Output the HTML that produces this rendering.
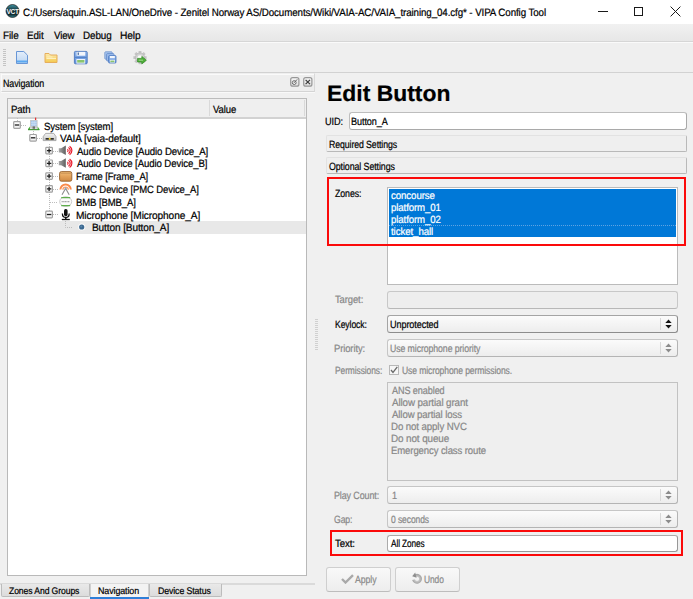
<!DOCTYPE html>
<html><head><meta charset="utf-8">
<style>
*{margin:0;padding:0;box-sizing:border-box}
html,body{width:693px;height:599px;overflow:hidden;background:#f0f0f0;font-family:"Liberation Sans",sans-serif;color:#000;position:relative}
.a{position:absolute}
.t{position:absolute;white-space:nowrap;transform-origin:0 0;text-rendering:geometricPrecision;-webkit-text-stroke:0.2px currentColor}
.exp{position:absolute;width:8px;height:8px;border:1px solid #a6a6a6;background:linear-gradient(#fff,#ececec);border-radius:1px}
.exp:before{content:"";position:absolute;left:1px;top:2px;width:4px;height:2px;background:#1a1a1a}
.exp.p:after{content:"";position:absolute;left:2px;top:1px;width:2px;height:4px;background:#1a1a1a}
.dh{position:absolute;height:1px;background:repeating-linear-gradient(90deg,#a8a8a8 0 1px,transparent 1px 2px)}
.dv{position:absolute;width:1px;background:repeating-linear-gradient(#a8a8a8 0 1px,transparent 1px 2px)}
.inp{position:absolute;background:#fff;border:1px solid #bdbdbd;border-right-color:#a9a9a9;border-bottom-color:#a9a9a9;border-radius:3px}
.combo{position:absolute;border:1px solid #c6c6c6;border-bottom-color:#b4b4b4;border-right-color:#b4b4b4;border-radius:3px;background:linear-gradient(#fbfbfb,#ededed)}
.combo .sep{position:absolute;right:16px;top:2px;bottom:2px;width:1px;background:#d8d8d8}
.bar{position:absolute;border:1px solid #e2e2e2;border-right-color:#b9b9b9;border-bottom-color:#b9b9b9;border-radius:2px;background:#efefef}
.btn{position:absolute;border:1px solid #cfcfcf;border-bottom-color:#bdbdbd;border-radius:3px;background:linear-gradient(#f9f9f9,#ededed)}
.red{position:absolute;border:2px solid #fb0a0a}
</style></head><body>
<!-- title bar -->
<div class="a" style="left:0;top:0;width:693px;height:24px;background:#fff"></div>
<svg class="a" style="left:0;top:0" width="24" height="24" viewBox="0 0 24 24">
  <defs><linearGradient id="gic" x1="0" y1="0" x2="0" y2="1"><stop offset="0" stop-color="#3f97a6"/><stop offset="0.4" stop-color="#1a3c44"/><stop offset="0.75" stop-color="#10282e"/><stop offset="1" stop-color="#2f8290"/></linearGradient></defs>
  <circle cx="12.5" cy="11" r="6.5" fill="url(#gic)" stroke="#1a1a1a" stroke-width="0.7"/>
  <text x="12.6" y="13.9" font-size="6.6" font-weight="bold" text-anchor="middle" fill="#f4f4f4" font-family="Liberation Sans" letter-spacing="-0.4">VCT</text>
</svg>
<div class="a" style="left:598px;top:11px;width:10px;height:1px;background:#1a1a1a"></div>
<div class="a" style="left:634px;top:7px;width:9px;height:9px;border:1px solid #1a1a1a"></div>
<svg class="a" style="left:670px;top:6px" width="11" height="11" viewBox="0 0 11 11"><path d="M0.6 0.6L10.4 10.4M10.4 0.6L0.6 10.4" stroke="#1a1a1a" stroke-width="1"/></svg>
<!-- menu -->
<div class="a" style="left:0;top:24px;width:693px;height:18px;background:linear-gradient(#f1f1f1,#e7e7e7);border-bottom:1px solid #d6d6d6"></div>
<!-- toolbar -->
<div class="a" style="left:0;top:42px;width:693px;height:31px;background:#efefef;border-top:1px solid #fafafa;border-bottom:1px solid #d2d2d2"></div>
<div class="a" style="left:3px;top:49px;width:3px;height:17px;background:repeating-linear-gradient(#c4c4c4 0 1px,transparent 1px 2px)"></div>
<svg class="a" style="left:15px;top:50px" width="14" height="15" viewBox="0 0 14 15">
  <defs><linearGradient id="gd" x1="0" y1="0" x2="0" y2="1"><stop offset="0" stop-color="#e4eefa"/><stop offset="1" stop-color="#bcd6f3"/></linearGradient></defs>
  <path d="M1.5 1.5H8.8L12.5 5.2V13.5H1.5Z" fill="url(#gd)" stroke="#6896d6" stroke-linejoin="round"/>
  <rect x="2" y="10.5" width="10" height="2" fill="#5aa8f0"/>
</svg>
<svg class="a" style="left:44px;top:52px" width="14" height="12" viewBox="0 0 14 12">
  <defs><linearGradient id="gf" x1="0" y1="0" x2="0" y2="1"><stop offset="0" stop-color="#fdeab0"/><stop offset="1" stop-color="#f4c94e"/></linearGradient></defs>
  <path d="M1 1.5H5L6.5 3H13V10.5H1Z" fill="url(#gf)" stroke="#e6ae5c" stroke-linejoin="round"/>
  <path d="M2.5 5H8.5M2.5 6.5H12" stroke="#fff6d0" stroke-width="0.8"/>
</svg>
<svg class="a" style="left:70px;top:47px" width="50" height="21" viewBox="70 47 50 21">
  <defs><linearGradient id="gsv" x1="0" y1="0" x2="0" y2="1"><stop offset="0" stop-color="#93b9ee"/><stop offset="1" stop-color="#5f8fd8"/></linearGradient></defs>
  <rect x="74.4" y="51.4" width="12.8" height="12.4" rx="1" fill="url(#gsv)" stroke="#4a76bc" stroke-width="0.9"/>
  <rect x="76.6" y="51.9" width="8.6" height="3.8" fill="#f2f6fc"/>
  <rect x="77.6" y="52.5" width="1.4" height="2.4" fill="#5a7aa8"/>
  <rect x="75" y="56.8" width="11.6" height="1" fill="#4d7cc4"/>
  <rect x="76.4" y="59" width="8.8" height="4.6" fill="#eef3fa"/>
  <rect x="77.2" y="60" width="7.2" height="2.6" fill="#8ac46e"/>
  <rect x="104.8" y="51.8" width="7.4" height="7.4" rx="0.8" fill="#a9c6f0" stroke="#6d93cc" stroke-width="0.8"/>
  <rect x="106.6" y="53.6" width="7.4" height="7.4" rx="0.8" fill="#9dbdec" stroke="#5f88c6" stroke-width="0.8"/>
  <rect x="108.6" y="55.6" width="7.4" height="7.4" rx="0.8" fill="url(#gsv)" stroke="#4a76bc" stroke-width="0.8"/>
  <rect x="110" y="56" width="4.8" height="2.2" fill="#f2f6fc"/>
  <rect x="109.8" y="59.8" width="5.2" height="2.8" fill="#eef3fa"/>
  <rect x="110.4" y="60.6" width="4" height="1.6" fill="#8ac46e"/>
</svg>
<svg class="a" style="left:128px;top:47px" width="24" height="21" viewBox="128 47 24 21">
  <g transform="translate(140 57.6)">
    <g fill="#c4c4c4">
      <rect x="-1.4" y="-6.6" width="2.8" height="3"/><rect x="-1.4" y="3.6" width="2.8" height="3"/><rect x="-6.6" y="-1.4" width="3" height="2.8"/><rect x="3.6" y="-1.4" width="3" height="2.8"/>
      <rect x="-1.4" y="-6.6" width="2.8" height="3" transform="rotate(45)"/><rect x="-1.4" y="-6.6" width="2.8" height="3" transform="rotate(-45)"/><rect x="-1.4" y="3.6" width="2.8" height="3" transform="rotate(45)"/><rect x="-1.4" y="3.6" width="2.8" height="3" transform="rotate(-45)"/>
    </g>
    <circle r="4.6" fill="#d2d2d2" stroke="#b0b0b0" stroke-width="0.6"/>
    <circle r="2.4" fill="#fbfbfb"/>
  </g>
  <path d="M137.6 58.4H141.8V56.4L146.4 60.2L141.8 64V62H137.6Z" fill="#4fae38" stroke="#2e8a22" stroke-width="0.7" stroke-linejoin="round"/>
  <path d="M138.6 60.2H143" stroke="#a8dc98" stroke-width="0.9"/>
</svg>
<!-- navigation dock title -->
<div class="a" style="left:1px;top:73px;width:314px;height:19px;border:1px solid #d9d9d9;border-left-color:#fafafa;border-top-color:#efefef;border-bottom-color:#d4d4d4;background:#eeeeee;box-shadow:inset 0 1px 0 #fafafa"></div>
<div class="a" style="left:1px;top:92px;width:314px;height:1px;background:#f9f9f9"></div>
<svg class="a" style="left:289px;top:76px" width="26" height="12" viewBox="289 76 26 12">
  <defs><linearGradient id="gdb" x1="0" y1="0" x2="0" y2="1"><stop offset="0" stop-color="#f6f6f6"/><stop offset="1" stop-color="#dedede"/></linearGradient></defs>
  <rect x="290.7" y="77.6" width="8.2" height="8.6" rx="2" fill="url(#gdb)" stroke="#979797" stroke-width="1.2"/>
  <circle cx="294.2" cy="82.6" r="1.9" fill="#fff" stroke="#5a5a5a" stroke-width="0.9"/>
  <path d="M293.6 83.2L297.2 79.4" stroke="#5a5a5a" stroke-width="0.9"/>
  <rect x="303.7" y="77.6" width="8.2" height="8.6" rx="2" fill="url(#gdb)" stroke="#979797" stroke-width="1.2"/>
  <path d="M305.6 79.8L310 84.2M310 79.8L305.6 84.2" stroke="#3a3a3a" stroke-width="1.2"/>
</svg>

<!-- tree view -->
<div class="a" style="left:7px;top:98px;width:300px;height:478px;border:1px solid #b9b9b9;border-top-color:#bcbcbc;background:#fff"></div>
<div class="a" style="left:8px;top:99px;width:298px;height:20px;background:#efefef;border-bottom:2px solid #d2d2d2"></div>
<div class="a" style="left:209px;top:100px;width:1px;height:16px;background:#d9d9d9"></div>
<div class="a" style="left:304px;top:100px;width:1px;height:16px;background:#d9d9d9"></div>
<div class="a" style="left:8px;top:221px;width:298px;height:13px;background:#e8e8e8"></div>
<!-- tree graphics -->
<svg class="a" style="left:0;top:0" width="320" height="240" viewBox="0 0 320 240">
  <defs>
    <linearGradient id="gexp" x1="0" y1="0" x2="0" y2="1"><stop offset="0" stop-color="#ffffff"/><stop offset="1" stop-color="#ededed"/></linearGradient>
    <linearGradient id="gspk" x1="0" y1="0" x2="1" y2="0"><stop offset="0" stop-color="#a8a8a8"/><stop offset="1" stop-color="#5e5e5e"/></linearGradient>
    <linearGradient id="gfr" x1="0" y1="0" x2="0" y2="1"><stop offset="0" stop-color="#f3c07c"/><stop offset="0.5" stop-color="#e3a25a"/><stop offset="1" stop-color="#cf8a44"/></linearGradient>
    <linearGradient id="gva" x1="0" y1="0" x2="0" y2="1"><stop offset="0" stop-color="#f4f4f4"/><stop offset="1" stop-color="#c4c4c4"/></linearGradient>
    <linearGradient id="gbl" x1="0" y1="0" x2="1" y2="0"><stop offset="0" stop-color="#c7c7c7"/><stop offset="0.5" stop-color="#f2f2f2"/><stop offset="1" stop-color="#bdbdbd"/></linearGradient>
  </defs>
  <g stroke="#bdbdbd" stroke-width="1" stroke-dasharray="1 1" fill="none">
    <path d="M17.5 118V121"/>
    <path d="M21 125.5H26"/>
    <path d="M33.5 131V134"/>
    <path d="M37 138.5H42"/>
    <path d="M49.5 144V211"/>
    <path d="M53 151.5H58M53 163.5H58M53 176.5H58M53 189.5H58M50 202.5H58M53 214.5H58"/>
    <path d="M65.5 221V227.5H73"/>
  </g>
  <g stroke="#a2a2a2" stroke-width="1.2" fill="url(#gexp)">
    <rect x="13.7" y="121.7" width="6.6" height="6.6" rx="0.8"/>
    <rect x="29.8" y="134.5" width="6.6" height="6.6" rx="0.8"/>
    <rect x="45.8" y="147.3" width="6.6" height="6.6" rx="0.8"/>
    <rect x="45.8" y="160" width="6.6" height="6.6" rx="0.8"/>
    <rect x="45.8" y="172.8" width="6.6" height="6.6" rx="0.8"/>
    <rect x="45.8" y="185.6" width="6.6" height="6.6" rx="0.8"/>
    <rect x="45.8" y="211.2" width="6.6" height="6.6" rx="0.8"/>
  </g>
  <g stroke="#1e1e1e" stroke-width="1.3" fill="none">
    <path d="M14.8 125H19.2"/>
    <path d="M30.9 137.8H35.3"/>
    <path d="M46.9 150.6H51.3M49.1 148.4V152.8"/>
    <path d="M46.9 163.3H51.3M49.1 161.1V165.5"/>
    <path d="M46.9 176.1H51.3M49.1 173.9V178.3"/>
    <path d="M46.9 188.9H51.3M49.1 186.7V191.1"/>
    <path d="M46.9 214.5H51.3"/>
  </g>
  <!-- system icon -->
  <path d="M35.6 117.6V120" stroke="#e23434" stroke-width="1.3"/>
  <rect x="30" y="120" width="7.6" height="8.6" fill="#c9c9c9"/>
  <rect x="31" y="120.8" width="5.6" height="5.4" fill="#a6c6ec"/>
  <path d="M31 122.6H36.6M31 124.4H36.6M32.9 120.8V126.2M34.8 120.8V126.2" stroke="#d8e6f6" stroke-width="0.5"/>
  <rect x="32.6" y="126.4" width="2.4" height="2.4" fill="#6e6e6e"/>
  <path d="M28 130V129L30 126.6V129.2H37.6V126.6L39.4 129V130Z" fill="#4fae3f"/>
  <rect x="28" y="129.2" width="11.4" height="1" fill="#3b8f2e"/>
  <!-- vaia icon -->
  <path d="M45.6 133.4H53.8L56 136.6V140.6H43.2V136.6Z" fill="url(#gva)" stroke="#9a9a9a" stroke-width="0.8"/>
  <path d="M44 137H55.2" stroke="#e6e6e6" stroke-width="0.6"/>
  <rect x="45.6" y="138" width="8.2" height="1.7" fill="#2e2e2e"/>
  <rect x="48.8" y="137.8" width="1.8" height="1.9" fill="#f4d424"/>
  <!-- speakers -->
  <g>
    <path d="M58.8 148.2H61.2L65.8 145.6V155.1L61.2 152.6H58.8Z" fill="url(#gspk)"/>
    <g fill="none" stroke="#ea1c2c" stroke-width="1.2">
      <path d="M67.3 149.3A1.3 1.3 0 0 1 67.3 151.7"/>
      <path d="M68.4 147.5A3.4 3.4 0 0 1 68.4 153.5"/>
      <path d="M69.6 146.2A5.2 5.2 0 0 1 69.6 154.8"/>
    </g>
  </g>
  <g transform="translate(0 12.7)">
    <path d="M58.8 148.2H61.2L65.8 145.6V155.1L61.2 152.6H58.8Z" fill="url(#gspk)"/>
    <g fill="none" stroke="#ea1c2c" stroke-width="1.2">
      <path d="M67.3 149.3A1.3 1.3 0 0 1 67.3 151.7"/>
      <path d="M68.4 147.5A3.4 3.4 0 0 1 68.4 153.5"/>
      <path d="M69.6 146.2A5.2 5.2 0 0 1 69.6 154.8"/>
    </g>
  </g>
  <!-- frame -->
  <rect x="59.6" y="171.6" width="12.2" height="9.6" rx="1.8" fill="url(#gfr)" stroke="#95602c" stroke-width="0.9"/>
  <path d="M60.4 173.2H71" stroke="#b07840" stroke-width="0.6"/>
  <!-- pmc -->
  <path d="M60.4 189.6A5.2 5.2 0 0 1 70.8 189.6" fill="none" stroke="#fa8a4a" stroke-width="2"/>
  <path d="M62.9 189.8A2.7 2.7 0 0 1 68.3 189.8" fill="none" stroke="#fca06a" stroke-width="1.4"/>
  <path d="M62 194.8L65.6 188.4L69.2 194.8" fill="none" stroke="#8e8e8e" stroke-width="1.1"/>
  <circle cx="65.6" cy="188.6" r="1" fill="#8ea2bc"/>
  <!-- bmb -->
  <ellipse cx="65.7" cy="201.6" rx="6" ry="4.9" fill="#fbfbfb" stroke="#b8b8b8" stroke-width="0.7"/>
  <path d="M61.2 197.6H70.2M61.2 205.6H70.2" stroke="#5fae4c" stroke-width="1.1"/>
  <path d="M61.6 201.7H69.8" stroke="#a4a4a4" stroke-width="1.3" stroke-dasharray="1.2 0.4"/>
  <!-- mic -->
  <rect x="64" y="209" width="3.6" height="7.2" rx="1.7" fill="#111"/>
  <path d="M62.4 213.4Q62.4 217.4 65.8 217.4Q69.2 217.4 69.2 213.4" fill="none" stroke="#111" stroke-width="1.3"/>
  <path d="M65.8 217V219.2" stroke="#111" stroke-width="1.5"/>
  <path d="M61.8 219.5H69.8" stroke="#111" stroke-width="1.3"/>
  <!-- button dot -->
  <circle cx="81.7" cy="227" r="3.6" fill="#fafafa"/>
  <circle cx="81.7" cy="227" r="2.6" fill="#3b6890"/>
  <circle cx="81.3" cy="226.5" r="1" fill="#5a86ac"/>
</svg>

<!-- bottom tabs -->
<div class="a" style="left:0px;top:583px;width:315px;height:2px;background:#dadada"></div>
<div class="a" style="left:1px;top:584px;width:89px;height:13px;border:1px solid #bcbcbc;border-top:0;border-radius:0 0 2px 2px;background:linear-gradient(#e9e9e9,#dcdcdc)"></div>
<div class="a" style="left:90px;top:584px;width:59px;height:13px;background:#f3f3f3;border-left:1px solid #cfcfcf;border-right:1px solid #cfcfcf"></div>
<div class="a" style="left:90px;top:597px;width:59px;height:2px;background:#2f7fd8"></div>
<div class="a" style="left:149px;top:584px;width:73px;height:13px;border:1px solid #bcbcbc;border-top:0;border-radius:0 0 2px 2px;background:linear-gradient(#e9e9e9,#dcdcdc)"></div>

<!-- splitter grip -->
<div class="a" style="left:315px;top:319px;width:3px;height:32px;background:repeating-linear-gradient(#d0d0d0 0 1px,transparent 1px 2px)"></div>

<!-- right panel -->
<div class="inp" style="left:349px;top:112px;width:338px;height:18px"></div>
<div class="bar" style="left:326px;top:135px;width:361px;height:17px"></div>
<div class="bar" style="left:326px;top:157px;width:361px;height:17px"></div>

<div class="a" style="left:387px;top:187px;width:291px;height:98px;background:#fff;border:1px solid #bbbbbb"></div>
<div class="a" style="left:389px;top:189px;width:287px;height:48px;background:#0078d7"></div>
<div class="a" style="left:389px;top:225px;width:287px;height:1px;background:repeating-linear-gradient(90deg,#5fa3e2 0 1px,transparent 1px 2px)"></div>

<div class="inp" style="left:387px;top:291px;width:291px;height:18px;background:#eeeeee;border-color:#c8c8c8;border-bottom-color:#b8b8b8"></div>

<div class="combo" style="left:387px;top:315px;width:291px;height:18px;border-color:#a4a4a4;border-bottom-color:#8c8c8c;border-right-color:#8c8c8c"><div class="sep"></div>
  <svg class="a" style="right:5px;top:3px" width="7" height="10" viewBox="0 0 7 10"><path d="M0.3 4L3.5 0.6L6.7 4ZM0.3 6L3.5 9.4L6.7 6Z" fill="#141414"/></svg>
</div>
<div class="combo" style="left:387px;top:339px;width:291px;height:18px"><div class="sep"></div>
  <svg class="a" style="right:5px;top:3px" width="7" height="10" viewBox="0 0 7 10"><path d="M0.3 4L3.5 0.6L6.7 4ZM0.3 6L3.5 9.4L6.7 6Z" fill="#8c8c8c"/></svg>
</div>
<div class="a" style="left:389px;top:365px;width:10px;height:10px;border:1px solid #b8b8b8;background:#f6f6f6"></div>
<svg class="a" style="left:389px;top:365px" width="10" height="10" viewBox="0 0 10 10"><path d="M2 5L4 7.5L8.3 1.8" fill="none" stroke="#6a6a6a" stroke-width="1.3"/></svg>

<div class="a" style="left:387px;top:382px;width:291px;height:99px;background:#efefef;border:1px solid #c2c2c2"></div>

<div class="combo" style="left:387px;top:486px;width:291px;height:18px"><div class="sep"></div>
  <svg class="a" style="right:5px;top:3px" width="7" height="10" viewBox="0 0 7 10"><path d="M0.3 4L3.5 0.6L6.7 4ZM0.3 6L3.5 9.4L6.7 6Z" fill="#8c8c8c"/></svg>
</div>
<div class="combo" style="left:387px;top:510px;width:291px;height:18px"><div class="sep"></div>
  <svg class="a" style="right:5px;top:3px" width="7" height="10" viewBox="0 0 7 10"><path d="M0.3 4L3.5 0.6L6.7 4ZM0.3 6L3.5 9.4L6.7 6Z" fill="#8c8c8c"/></svg>
</div>
<div class="inp" style="left:387px;top:535px;width:291px;height:17px;border-color:#ababab;border-bottom-color:#989898;border-right-color:#989898"></div>

<div class="btn" style="left:326px;top:567px;width:65px;height:25px"></div>
<svg class="a" style="left:341px;top:574px" width="13" height="10" viewBox="0 0 13 10"><path d="M1 5L4.5 8.5L12 1.2" fill="none" stroke="#a9a9a9" stroke-width="2.4"/></svg>
<div class="btn" style="left:395px;top:567px;width:65px;height:25px"></div>
<svg class="a" style="left:406px;top:568px" width="24" height="22" viewBox="406 568 24 22">
  <defs><radialGradient id="gun" cx="417" cy="579" r="5" gradientUnits="userSpaceOnUse"><stop offset="0.3" stop-color="#d4d4d4"/><stop offset="1" stop-color="#a0a0a0"/></radialGradient></defs>
  <path d="M415.6 575.6A3.5 3.5 0 1 1 413.6 579.6" fill="none" stroke="url(#gun)" stroke-width="2.9"/>
  <path d="M412.2 576.2L415.2 572.4L416.6 577.8Z" fill="#8e8e8e"/>
</svg>

<div class="t" id="title" style="left:22.50px;top:7.99px;font-size:10px;line-height:12px;letter-spacing:-0.100px;color:#000;transform:scaleX(0.9772) scaleY(1.060);transform-origin:0 9.46px">C:/Users/aquin.ASL-LAN/OneDrive - Zenitel Norway AS/Documents/Wiki/VAIA-AC/VAIA_training_04.cfg* - VIPA Config Tool</div>
<div class="t" id="m_file" style="left:3.30px;top:30.90px;font-size:10px;line-height:12px;letter-spacing:-0.100px;color:#000;transform:scaleX(0.9951) scaleY(1.060);transform-origin:0 9.46px">File</div>
<div class="t" id="m_edit" style="left:27.30px;top:30.90px;font-size:10px;line-height:12px;letter-spacing:-0.100px;color:#000;transform:scaleX(0.9828) scaleY(1.060);transform-origin:0 9.46px">Edit</div>
<div class="t" id="m_view" style="left:53.60px;top:30.90px;font-size:10px;line-height:12px;letter-spacing:-0.100px;color:#000;transform:scaleX(0.9719) scaleY(1.060);transform-origin:0 9.46px">View</div>
<div class="t" id="m_debug" style="left:82.90px;top:30.90px;font-size:10px;line-height:12px;letter-spacing:-0.100px;color:#000;transform:scaleX(0.9877) scaleY(1.060);transform-origin:0 9.46px">Debug</div>
<div class="t" id="m_help" style="left:119.70px;top:30.90px;font-size:10px;line-height:12px;letter-spacing:-0.100px;color:#000;transform:scaleX(1.0213) scaleY(1.060);transform-origin:0 9.46px">Help</div>
<div class="t" id="nav" style="left:2.80px;top:78.69px;font-size:9.9px;line-height:12px;letter-spacing:-0.100px;color:#000;transform:scaleX(0.9008) scaleY(1.060);transform-origin:0 9.43px">Navigation</div>
<div class="t" id="path" style="left:10.90px;top:105.29px;font-size:9.9px;line-height:12px;letter-spacing:-0.100px;color:#000;transform:scaleX(0.9777) scaleY(1.060);transform-origin:0 9.43px">Path</div>
<div class="t" id="value" style="left:213.40px;top:105.29px;font-size:9.9px;line-height:12px;letter-spacing:-0.100px;color:#000;transform:scaleX(0.9620) scaleY(1.060);transform-origin:0 9.43px">Value</div>
<div class="t" id="row0" style="left:44.30px;top:121.59px;font-size:9.9px;line-height:12px;letter-spacing:-0.100px;color:#000;transform:scaleX(0.9727) scaleY(1.060);transform-origin:0 9.43px">System [system]</div>
<div class="t" id="row1" style="left:60.10px;top:134.09px;font-size:9.9px;line-height:12px;letter-spacing:-0.100px;color:#000;transform:scaleX(1.0256) scaleY(1.060);transform-origin:0 9.43px">VAIA [vaia-default]</div>
<div class="t" id="row2" style="left:76.80px;top:146.79px;font-size:9.9px;line-height:12px;letter-spacing:-0.100px;color:#000;transform:scaleX(0.9806) scaleY(1.060);transform-origin:0 9.43px">Audio Device [Audio Device_A]</div>
<div class="t" id="row3" style="left:76.80px;top:159.40px;font-size:9.9px;line-height:12px;letter-spacing:-0.100px;color:#000;transform:scaleX(0.9741) scaleY(1.060);transform-origin:0 9.43px">Audio Device [Audio Device_B]</div>
<div class="t" id="row4" style="left:75.80px;top:172.19px;font-size:9.9px;line-height:12px;letter-spacing:-0.100px;color:#000;transform:scaleX(0.9505) scaleY(1.060);transform-origin:0 9.43px">Frame [Frame_A]</div>
<div class="t" id="row5" style="left:75.80px;top:184.99px;font-size:9.9px;line-height:12px;letter-spacing:-0.100px;color:#000;transform:scaleX(0.9622) scaleY(1.060);transform-origin:0 9.43px">PMC Device [PMC Device_A]</div>
<div class="t" id="row6" style="left:75.80px;top:197.69px;font-size:9.9px;line-height:12px;letter-spacing:-0.100px;color:#000;transform:scaleX(0.9646) scaleY(1.060);transform-origin:0 9.43px">BMB [BMB_A]</div>
<div class="t" id="row7" style="left:75.80px;top:210.69px;font-size:9.9px;line-height:12px;letter-spacing:-0.100px;color:#000;transform:scaleX(1.0255) scaleY(1.060);transform-origin:0 9.43px">Microphone [Microphone_A]</div>
<div class="t" id="row8" style="left:91.80px;top:223.49px;font-size:9.9px;line-height:12px;letter-spacing:-0.100px;color:#000;transform:scaleX(1.0180) scaleY(1.060);transform-origin:0 9.43px">Button [Button_A]</div>
<div class="t" id="tab1" style="left:8.80px;top:585.85px;font-size:9px;line-height:11px;letter-spacing:-0.100px;color:#000;transform:scaleX(0.9571) scaleY(1.060);transform-origin:0 8.62px">Zones And Groups</div>
<div class="t" id="tab2" style="left:98.20px;top:586.35px;font-size:9px;line-height:11px;letter-spacing:-0.100px;color:#000;transform:scaleX(0.9892) scaleY(1.060);transform-origin:0 8.62px">Navigation</div>
<div class="t" id="tab3" style="left:158.10px;top:585.85px;font-size:9px;line-height:11px;letter-spacing:-0.100px;color:#000;transform:scaleX(0.9724) scaleY(1.060);transform-origin:0 8.62px">Device Status</div>
<div class="t" id="edit" style="left:326.70px;top:80.00px;font-size:22.5px;line-height:27px;letter-spacing:0.000px;color:#000;transform:scaleX(1.0189) scaleY(1.000);transform-origin:0 21.30px;font-weight:bold">Edit Button</div>
<div class="t" id="uid" style="left:325.30px;top:116.90px;font-size:9.9px;line-height:12px;letter-spacing:-0.100px;color:#000;transform:scaleX(0.9302) scaleY(1.060);transform-origin:0 9.43px">UID:</div>
<div class="t" id="uidv" style="left:350.80px;top:116.90px;font-size:9.9px;line-height:12px;letter-spacing:-0.100px;color:#000;transform:scaleX(0.9223) scaleY(1.060);transform-origin:0 9.43px">Button_A</div>
<div class="t" id="req" style="left:328.50px;top:139.90px;font-size:9.9px;line-height:12px;letter-spacing:-0.100px;color:#000;transform:scaleX(0.8855) scaleY(1.060);transform-origin:0 9.43px">Required Settings</div>
<div class="t" id="opt" style="left:328.50px;top:161.90px;font-size:9.9px;line-height:12px;letter-spacing:-0.100px;color:#000;transform:scaleX(0.8956) scaleY(1.060);transform-origin:0 9.43px">Optional Settings</div>
<div class="t" id="zones" style="left:334.50px;top:188.90px;font-size:9.9px;line-height:12px;letter-spacing:-0.100px;color:#000;transform:scaleX(0.8911) scaleY(1.060);transform-origin:0 9.43px">Zones:</div>
<div class="t" id="z0" style="left:391.10px;top:191.29px;font-size:9.9px;line-height:12px;letter-spacing:-0.100px;color:#fff;transform:scaleX(0.9817) scaleY(1.060);transform-origin:0 9.43px">concourse</div>
<div class="t" id="z1" style="left:391.10px;top:203.29px;font-size:9.9px;line-height:12px;letter-spacing:-0.100px;color:#fff;transform:scaleX(0.9749) scaleY(1.060);transform-origin:0 9.43px">platform_01</div>
<div class="t" id="z2" style="left:391.10px;top:215.29px;font-size:9.9px;line-height:12px;letter-spacing:-0.100px;color:#fff;transform:scaleX(0.9749) scaleY(1.060);transform-origin:0 9.43px">platform_02</div>
<div class="t" id="z3" style="left:391.10px;top:227.29px;font-size:9.9px;line-height:12px;letter-spacing:-0.100px;color:#fff;transform:scaleX(0.9837) scaleY(1.060);transform-origin:0 9.43px">ticket_hall</div>
<div class="t" id="target" style="left:334.60px;top:295.49px;font-size:9.9px;line-height:12px;letter-spacing:-0.100px;color:#878787;transform:scaleX(0.9551) scaleY(1.060);transform-origin:0 9.43px">Target:</div>
<div class="t" id="keylock" style="left:334.60px;top:319.69px;font-size:9.9px;line-height:12px;letter-spacing:-0.100px;color:#000;transform:scaleX(0.8724) scaleY(1.060);transform-origin:0 9.43px">Keylock:</div>
<div class="t" id="unprot" style="left:390.30px;top:319.69px;font-size:9.9px;line-height:12px;letter-spacing:-0.100px;color:#000;transform:scaleX(0.9209) scaleY(1.060);transform-origin:0 9.43px">Unprotected</div>
<div class="t" id="prio" style="left:333.60px;top:343.69px;font-size:9.9px;line-height:12px;letter-spacing:-0.100px;color:#878787;transform:scaleX(0.9530) scaleY(1.060);transform-origin:0 9.43px">Priority:</div>
<div class="t" id="priov" style="left:390.30px;top:343.69px;font-size:9.9px;line-height:12px;letter-spacing:-0.100px;color:#878787;transform:scaleX(0.8851) scaleY(1.060);transform-origin:0 9.43px">Use microphone priority</div>
<div class="t" id="perm" style="left:334.60px;top:366.19px;font-size:9.9px;line-height:12px;letter-spacing:-0.100px;color:#878787;transform:scaleX(0.8530) scaleY(1.060);transform-origin:0 9.43px">Permissions:</div>
<div class="t" id="permv" style="left:402.40px;top:366.19px;font-size:9.9px;line-height:12px;letter-spacing:-0.100px;color:#878787;transform:scaleX(0.8638) scaleY(1.060);transform-origin:0 9.43px">Use microphone permissions.</div>
<div class="t" id="p0" style="left:391.50px;top:385.99px;font-size:9.9px;line-height:12px;letter-spacing:-0.100px;color:#878787;transform:scaleX(0.9206) scaleY(1.060);transform-origin:0 9.43px">ANS enabled</div>
<div class="t" id="p1" style="left:391.50px;top:397.99px;font-size:9.9px;line-height:12px;letter-spacing:-0.100px;color:#878787;transform:scaleX(0.9907) scaleY(1.060);transform-origin:0 9.43px">Allow partial grant</div>
<div class="t" id="p2" style="left:391.50px;top:409.99px;font-size:9.9px;line-height:12px;letter-spacing:-0.100px;color:#878787;transform:scaleX(0.9744) scaleY(1.060);transform-origin:0 9.43px">Allow partial loss</div>
<div class="t" id="p3" style="left:390.50px;top:421.99px;font-size:9.9px;line-height:12px;letter-spacing:-0.100px;color:#878787;transform:scaleX(0.9791) scaleY(1.060);transform-origin:0 9.43px">Do not apply NVC</div>
<div class="t" id="p4" style="left:390.50px;top:433.99px;font-size:9.9px;line-height:12px;letter-spacing:-0.100px;color:#878787;transform:scaleX(1.0005) scaleY(1.060);transform-origin:0 9.43px">Do not queue</div>
<div class="t" id="p5" style="left:390.50px;top:445.99px;font-size:9.9px;line-height:12px;letter-spacing:-0.100px;color:#878787;transform:scaleX(0.9662) scaleY(1.060);transform-origin:0 9.43px">Emergency class route</div>
<div class="t" id="pc" style="left:334.20px;top:491.19px;font-size:9.9px;line-height:12px;letter-spacing:-0.100px;color:#878787;transform:scaleX(0.9030) scaleY(1.060);transform-origin:0 9.43px">Play Count:</div>
<div class="t" id="pcv" style="left:391.50px;top:491.19px;font-size:9.9px;line-height:12px;letter-spacing:-0.100px;color:#878787;transform:scaleX(0.9200) scaleY(1.060);transform-origin:0 9.43px">1</div>
<div class="t" id="gap" style="left:334.20px;top:515.19px;font-size:9.9px;line-height:12px;letter-spacing:-0.100px;color:#878787;transform:scaleX(0.8764) scaleY(1.060);transform-origin:0 9.43px">Gap:</div>
<div class="t" id="gapv" style="left:390.80px;top:515.19px;font-size:9.9px;line-height:12px;letter-spacing:-0.100px;color:#878787;transform:scaleX(0.8615) scaleY(1.060);transform-origin:0 9.43px">0 seconds</div>
<div class="t" id="text" style="left:334.70px;top:539.49px;font-size:9.9px;line-height:12px;letter-spacing:-0.100px;color:#000;transform:scaleX(0.9751) scaleY(1.060);transform-origin:0 9.43px">Text:</div>
<div class="t" id="textv" style="left:390.80px;top:539.49px;font-size:9.9px;line-height:12px;letter-spacing:-0.100px;color:#000;transform:scaleX(0.8326) scaleY(1.060);transform-origin:0 9.43px">All Zones</div>
<div class="t" id="apply" style="left:354.80px;top:575.19px;font-size:9.9px;line-height:12px;letter-spacing:-0.100px;color:#8a8a8a;transform:scaleX(0.8867) scaleY(1.060);transform-origin:0 9.43px">Apply</div>
<div class="t" id="undo" style="left:423.90px;top:575.19px;font-size:9.9px;line-height:12px;letter-spacing:-0.100px;color:#8a8a8a;transform:scaleX(0.8499) scaleY(1.060);transform-origin:0 9.43px">Undo</div>
<div class="red" style="left:327px;top:177px;width:359px;height:69px"></div>
<div class="red" style="left:330px;top:530px;width:353px;height:26px"></div>
</body></html>
